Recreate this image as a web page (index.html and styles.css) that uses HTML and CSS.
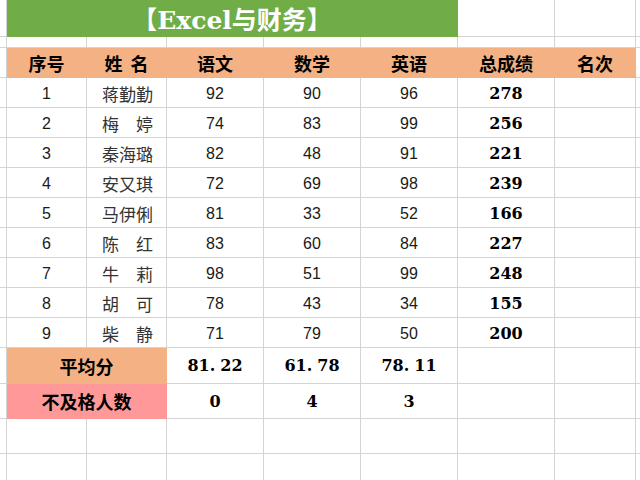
FILE: index.html
```html
<!DOCTYPE html>
<html lang="zh-CN">
<head>
<meta charset="utf-8">
<title>Excel与财务</title>
<link rel="stylesheet" href="styles.css">
</head>
<body>
<div class="sheet">
  <!-- title row -->
  <div class="c r-title"></div>
  <div class="c r-title title">【Excel与财务】</div>
  <div class="c r-title"></div>
  <div class="c r-title"></div>
  <div class="c r-title edge"></div>

  <!-- thin blank row -->
  <div class="c r-thin"></div><div class="c r-thin"></div><div class="c r-thin"></div><div class="c r-thin"></div><div class="c r-thin"></div><div class="c r-thin"></div><div class="c r-thin"></div><div class="c r-thin"></div><div class="c r-thin edge"></div>

  <!-- header -->
  <div class="c r-data"></div>
  <div class="c r-data head">序号</div>
  <div class="c r-data head">姓&nbsp;名</div>
  <div class="c r-data head">语文</div>
  <div class="c r-data head">数学</div>
  <div class="c r-data head">英语</div>
  <div class="c r-data head">总成绩</div>
  <div class="c r-data head">名次</div>
  <div class="c r-data edge"></div>

  <div class="c r-data"></div><div class="c r-data num">1</div><div class="c r-data name"><span>蒋</span><span>勤</span><span>勤</span></div><div class="c r-data num">92</div><div class="c r-data num">90</div><div class="c r-data num">96</div><div class="c r-data tot">278</div><div class="c r-data"></div><div class="c r-data edge"></div>
  <div class="c r-data"></div><div class="c r-data num">2</div><div class="c r-data name"><span>梅</span><span>婷</span></div><div class="c r-data num">74</div><div class="c r-data num">83</div><div class="c r-data num">99</div><div class="c r-data tot">256</div><div class="c r-data"></div><div class="c r-data edge"></div>
  <div class="c r-data"></div><div class="c r-data num">3</div><div class="c r-data name"><span>秦</span><span>海</span><span>璐</span></div><div class="c r-data num">82</div><div class="c r-data num">48</div><div class="c r-data num">91</div><div class="c r-data tot">221</div><div class="c r-data"></div><div class="c r-data edge"></div>
  <div class="c r-data"></div><div class="c r-data num">4</div><div class="c r-data name"><span>安</span><span>又</span><span>琪</span></div><div class="c r-data num">72</div><div class="c r-data num">69</div><div class="c r-data num">98</div><div class="c r-data tot">239</div><div class="c r-data"></div><div class="c r-data edge"></div>
  <div class="c r-data"></div><div class="c r-data num">5</div><div class="c r-data name"><span>马</span><span>伊</span><span>俐</span></div><div class="c r-data num">81</div><div class="c r-data num">33</div><div class="c r-data num">52</div><div class="c r-data tot">166</div><div class="c r-data"></div><div class="c r-data edge"></div>
  <div class="c r-data"></div><div class="c r-data num">6</div><div class="c r-data name"><span>陈</span><span>红</span></div><div class="c r-data num">83</div><div class="c r-data num">60</div><div class="c r-data num">84</div><div class="c r-data tot">227</div><div class="c r-data"></div><div class="c r-data edge"></div>
  <div class="c r-data"></div><div class="c r-data num">7</div><div class="c r-data name"><span>牛</span><span>莉</span></div><div class="c r-data num">98</div><div class="c r-data num">51</div><div class="c r-data num">99</div><div class="c r-data tot">248</div><div class="c r-data"></div><div class="c r-data edge"></div>
  <div class="c r-data"></div><div class="c r-data num">8</div><div class="c r-data name"><span>胡</span><span>可</span></div><div class="c r-data num">78</div><div class="c r-data num">43</div><div class="c r-data num">34</div><div class="c r-data tot">155</div><div class="c r-data"></div><div class="c r-data edge"></div>
  <div class="c r-data"></div><div class="c r-data num">9</div><div class="c r-data name"><span>柴</span><span>静</span></div><div class="c r-data num">71</div><div class="c r-data num">79</div><div class="c r-data num">50</div><div class="c r-data tot">200</div><div class="c r-data"></div><div class="c r-data edge"></div>

  <!-- average -->
  <div class="c r-avg"></div>
  <div class="c r-avg label avg">平均分</div>
  <div class="c r-avg tot">81<span class="dot">.</span>22</div>
  <div class="c r-avg tot">61<span class="dot">.</span>78</div>
  <div class="c r-avg tot">78<span class="dot">.</span>11</div>
  <div class="c r-avg"></div><div class="c r-avg"></div><div class="c r-avg edge"></div>

  <!-- fail count -->
  <div class="c r-low"></div>
  <div class="c r-low label fail">不及格人数</div>
  <div class="c r-low tot">0</div>
  <div class="c r-low tot">4</div>
  <div class="c r-low tot">3</div>
  <div class="c r-low"></div><div class="c r-low"></div><div class="c r-low edge"></div>

  <div class="c r-low"></div><div class="c r-low"></div><div class="c r-low"></div><div class="c r-low"></div><div class="c r-low"></div><div class="c r-low"></div><div class="c r-low"></div><div class="c r-low"></div><div class="c r-low edge"></div>
  <div class="c r-low"></div><div class="c r-low"></div><div class="c r-low"></div><div class="c r-low"></div><div class="c r-low"></div><div class="c r-low"></div><div class="c r-low"></div><div class="c r-low"></div><div class="c r-low edge"></div>
</div>
</body>
</html>
```

FILE: styles.css
```css
* { box-sizing: border-box; }
html, body { margin: 0; padding: 0; overflow: hidden; background: #ffffff; }

.sheet {
  display: grid;
  grid-template-columns: 7px 80px 80px 97px 97px 97px 97px 81px 1fr;
  width: 640px;
  font-family: "Liberation Sans", "Noto Sans CJK SC", sans-serif;
  color: #111;
}

.c {
  border-right: 1px solid #d4d4d4;
  border-bottom: 1px solid #d4d4d4;
  display: flex;
  align-items: center;
  justify-content: center;
  white-space: nowrap;
  min-width: 0;
}
.edge { border-right: none; }

.r-title { height: 37px; }
.r-thin { height: 11px; }
.r-data { height: 30px; padding-top: 2px; }
.r-avg { height: 36px; }
.r-low { height: 35px; }

.title {
  grid-column: span 5;
  background: #70ad47;
  border-color: #70ad47;
  color: #ffffff;
  font-family: "DejaVu Serif", "Noto Sans CJK SC", serif;
  font-weight: 700;
  font-size: 25px;
  padding-top: 0;
}

.head {
  background: #f4b183;
  border-color: #f4b183;
  font-family: "Noto Sans CJK SC", sans-serif;
  font-weight: 700;
  font-size: 18px;
  word-spacing: 4px;
  padding-top: 0;
  color: #000;
}

.num {
  font-family: "Liberation Sans", sans-serif;
  font-size: 16px;
  color: #1a1a1a;
}

.name {
  justify-content: space-between;
  padding: 2px 13px 0 15px;
  font-family: "Noto Sans CJK SC", sans-serif;
  font-size: 17px;
  color: #333;
}

.tot {
  font-family: "DejaVu Serif", serif;
  font-weight: 700;
  font-size: 16px;
  color: #000;
}
.dot { margin-right: 5px; }

.label {
  grid-column: span 2;
  font-family: "Noto Sans CJK SC", sans-serif;
  font-weight: 700;
  font-size: 18px;
  color: #000;
}
.avg { background: #f4b183; border-color: #f4b183; }
.fail { background: #ff9999; border-color: #ff9999; }
```
